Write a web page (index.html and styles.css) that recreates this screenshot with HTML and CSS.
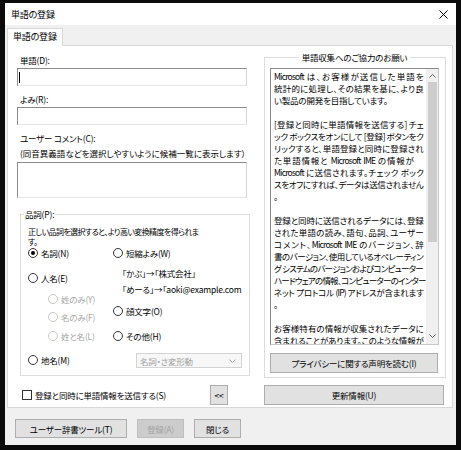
FILE: index.html
```html
<!DOCTYPE html>
<html lang="ja">

<head>
    <meta charset="UTF-8">
    <meta name="viewport" content="width=device-width, initial-scale=1.0">
    <title>単語の登録</title>
    <link rel="stylesheet" href="styles.css">
</head>

<body>
    <div class="window">
        <div class="titlebar">
            <span class="title">単語の登録</span>
            <svg class="close" width="9" height="9" viewBox="0 0 9 9">
                <path d="M0.5 0.5 L8.5 8.5 M8.5 0.5 L0.5 8.5" stroke="#000" stroke-width="1" fill="none" />
            </svg>
        </div>

        <div class="dialog">
            <div class="tabs">
                <div class="tab">単語の登録</div>
            </div>

            <div class="tab-panel">
                <!-- left side: word, reading, comment and part of speech -->
                <div class="entry">
                    <label class="field-label">単語(D):</label>
                    <div class="edit"><span class="caret"></span></div>

                    <label class="field-label spaced">よみ(R):</label>
                    <div class="edit"></div>

                    <label class="field-label spaced">ユーザー コメント(C):</label>
                    <div class="hint">(同音異義語などを選択しやすいように候補一覧に表示します）</div>
                    <div class="edit memo"></div>

                    <fieldset class="group pos">
                        <legend>品詞(P):</legend>
                        <p class="pos-note">正しい品詞を選択すると、より高い変換精度を得られま<br>す。</p>

                        <div class="pos-options">
                            <div class="pos-col first">
                                <div class="option"><span class="radio checked"></span>名詞(N)</div>
                                <div class="option person"><span class="radio"></span>人名(E)</div>
                                <div class="option sub name-1 disabled"><span class="radio"></span>姓のみ(Y)</div>
                                <div class="option sub name-2 disabled"><span class="radio"></span>名のみ(F)</div>
                                <div class="option sub name-3 disabled"><span class="radio"></span>姓と名(L)</div>
                                <div class="option place"><span class="radio"></span>地名(M)</div>
                            </div>
                            <div class="pos-col">
                                <div class="option"><span class="radio"></span>短縮よみ(W)</div>
                                <div class="example ex-1">「かぶ」→「株式会社」</div>
                                <div class="example ex-2">「めーる」→「aoki@example.com</div>
                                <div class="option face"><span class="radio"></span>顔文字(O)</div>
                                <div class="option other"><span class="radio"></span>その他(H)</div>
                                <div class="combo">
                                    <span>名詞・さ変形動</span>
                                    <svg width="7" height="4" viewBox="0 0 7 4">
                                        <path d="M0.5 0.5 L3.5 3.5 L6.5 0.5" stroke="#b5b5b5" fill="none" />
                                    </svg>
                                </div>
                            </div>
                        </div>
                    </fieldset>
                </div>

                <!-- right side: data collection notice -->
                <fieldset class="group notice">
                    <legend>単語収集へのご協力のお願い</legend>
                    <div class="notice-box">
                        <div class="notice-text">
                            <span class="ln">Microsoft は、お客様が送信した単語を</span>
                            <span class="ln">統計的に処理し、その結果を基に、より良</span>
                            い製品の開発を目指しています。<br><br>
                            <span class="ln">[登録と同時に単語情報を送信する] チェ</span>
                            <span class="ln">ック ボックスをオンにして [登録] ボタンをク</span>
                            <span class="ln">リックすると、単語登録と同時に登録され</span>
                            <span class="ln short">た単語情報と Microsoft IME の情報が</span>
                            <span class="ln">Microsoft に送信されます。チェック ボック</span>
                            <span class="ln">スをオフにすれば、データは送信されません</span>
                            。<br><br>
                            <span class="ln">登録と同時に送信されるデータには、登録</span>
                            <span class="ln">された単語の読み、語句、品詞、ユーザー</span>
                            <span class="ln">コメント、Microsoft IME のバージョン、辞</span>
                            <span class="ln">書のバージョン、使用しているオペレーティン</span>
                            <span class="ln">グ システムのバージョンおよびコンピューター</span>
                            <span class="ln">ハードウェアの情報、コンピューターのインター</span>
                            <span class="ln">ネット プロトコル (IP) アドレスが含まれます</span>
                            。<br><br>
                            <span class="ln">お客様特有の情報が収集されたデータに</span>
                            <span class="ln">含まれることがあります。このような情報が</span>
                        </div>
                        <div class="scrollbar">
                            <svg class="arrow" width="7" height="4" viewBox="0 0 7 4">
                                <path d="M0.5 3.5 L3.5 0.5 L6.5 3.5" stroke="#606060" fill="none" />
                            </svg>
                            <div class="thumb"></div>
                            <svg class="arrow down" width="7" height="4" viewBox="0 0 7 4">
                                <path d="M0.5 0.5 L3.5 3.5 L6.5 0.5" stroke="#606060" fill="none" />
                            </svg>
                        </div>
                    </div>
                    <button class="btn wide">プライバシーに関する声明を読む(I)</button>
                </fieldset>

                <div class="send-row">
                    <span class="checkbox"></span>
                    <span>登録と同時に単語情報を送信する(S)</span>
                    <button class="btn collapse">&lt;&lt;</button>
                </div>
                <button class="btn update">更新情報(U)</button>
            </div>

            <div class="footer">
                <button class="btn tool">ユーザー辞書ツール(T)</button>
                <button class="btn small" disabled>登録(A)</button>
                <button class="btn small">閉じる</button>
            </div>
        </div>
    </div>
</body>

</html>
```

FILE: styles.css
```css
* {
    margin: 0;
    padding: 0;
    box-sizing: border-box;
}

body {
    background: #0b0b0b;
    padding: 3px 5px 5px 5px;
    font-family: 'Noto Sans CJK JP', sans-serif;
    font-size: 8.5px;
    letter-spacing: -0.2px;
    font-feature-settings: "palt";
    color: #000;
}

.window {
    width: 451px;
    height: 442px;
    background: #f0f0f0;
    display: flex;
    flex-direction: column;
}

.titlebar {
    height: 22px;
    background: #fff;
    display: flex;
    align-items: center;
    justify-content: space-between;
    padding: 0 8px 0 6px;
    font-size: 9px;
}

.dialog {
    flex: 1;
    padding: 3px 3px 0 2px;
    display: flex;
    flex-direction: column;
}

.tabs {
    display: flex;
}

.tab {
    height: 18px;
    line-height: 16px;
    padding: 0 5px;
    font-size: 9px;
    background: #fff;
    border: 1px solid #d9d9d9;
    border-bottom: none;
    margin-bottom: -1px;
    position: relative;
    z-index: 1;
}

.tab-panel {
    height: 363px;
    background: #fff;
    border: 1px solid #d9d9d9;
    display: grid;
    grid-template-columns: 233px 182px;
    grid-template-rows: 327px 20px;
    column-gap: 14px;
    row-gap: 7px;
    padding: 5px 6px 0 9px;
}

/* left column */

.entry {
    padding-top: 3px;
}

.field-label {
    display: block;
    line-height: 12px;
    padding-left: 3px;
}

.field-label.spaced {
    margin-top: 7px;
}

.edit {
    width: 230px;
    height: 18px;
    margin-top: 2px;
    border: 1px solid;
    border-color: #8a8a8a #d6d6d6 #e4e4e4 #8a8a8a;
    display: flex;
    align-items: center;
}

.edit.memo {
    height: 36px;
    margin-top: 3px;
}

.caret {
    width: 1px;
    height: 11px;
    margin-left: 1px;
    background: #000;
}

.hint {
    margin-top: 3px;
    line-height: 12px;
    padding-left: 3px;
    letter-spacing: 0;
    white-space: nowrap;
}

.group {
    border: 1px solid #dcdcdc;
    min-width: 0;
}

.group legend {
    line-height: 12px;
    padding: 0 1px;
}

.pos {
    width: 230px;
    height: 168px;
    margin: 10px 0 0 3px;
    padding: 7px 0 0 7px;
}

.pos legend {
    margin-left: -4px;
}

.pos-note {
    font-size: 8px;
    line-height: 10px;
    letter-spacing: -0.6px;
    margin-bottom: 1px;
}

.pos-options {
    display: flex;
}

.pos-col.first {
    width: 85px;
}

.option {
    display: flex;
    align-items: center;
    gap: 3px;
    height: 10px;
    line-height: 10px;
}

.option.person { margin-top: 15px; }
.option.name-1 { margin-top: 11px; }
.option.name-2 { margin-top: 8px; }
.option.name-3 { margin-top: 9px; }
.option.place { margin-top: 14px; }
.option.face { margin-top: 12px; }
.option.other { margin-top: 15px; }

.option.sub {
    padding-left: 20px;
}

.option.disabled {
    color: #a6a6a6;
}

.radio {
    width: 10px;
    height: 10px;
    border: 1px solid #333;
    border-radius: 50%;
    background: #fff;
    display: flex;
    align-items: center;
    justify-content: center;
}

.radio.checked::after {
    content: '';
    width: 4px;
    height: 4px;
    border-radius: 50%;
    background: #000;
}

.disabled .radio {
    border-color: #c8c8c8;
}

.example {
    height: 10px;
    line-height: 10px;
    padding-left: 9px;
    white-space: nowrap;
}

.example.ex-1 { margin-top: 10px; }
.example.ex-2 { margin-top: 6px; }

.combo {
    width: 106px;
    height: 15px;
    margin: 12px 0 0 23px;
    padding: 0 5px 0 3px;
    border: 1px solid #d3d3d3;
    background: #f7f7f7;
    color: #a0a0a0;
    display: flex;
    align-items: center;
    justify-content: space-between;
}

/* right column */

.notice {
    padding: 5px 6px 4px 5px;
}

.notice legend {
    margin: 0 auto;
    padding: 0 3px;
}

.notice-box {
    height: 277px;
    border: 1px solid;
    border-color: #8a8a8a #c8c8c8 #c8c8c8 #8a8a8a;
    display: flex;
}

.notice-text {
    flex: 1;
    overflow: hidden;
    white-space: nowrap;
    line-height: 12px;
    padding: 1px 3px 0 3px;
}

/* full lines are spread to the box width, like the wrapped text of an edit box */
.notice-text .ln {
    display: block;
    letter-spacing: -0.8px;
    text-align: justify;
    text-align-last: justify;
}

.notice-text .ln.short {
    padding-right: 10px;
}

.scrollbar {
    width: 12px;
    flex-shrink: 0;
    background: #f0f0f0;
    display: flex;
    flex-direction: column;
    align-items: center;
}

.scrollbar .arrow {
    margin-top: 5px;
    flex-shrink: 0;
}

.scrollbar .arrow.down {
    margin: auto 0 6px;
}

.thumb {
    width: 9px;
    height: 160px;
    margin-top: 4px;
    background: #cdcdcd;
}

.btn {
    font-family: inherit;
    font-size: 8.5px;
    letter-spacing: -0.2px;
    font-feature-settings: "palt";
    color: #000;
    background: #e1e1e1;
    border: 1px solid #adadad;
    height: 20px;
}

.btn:disabled {
    background: #cccccc;
    border-color: #bfbfbf;
    color: #a3a3a3;
}

.btn.wide {
    width: 168px;
    margin-top: 8px;
}

.send-row {
    display: flex;
    align-items: center;
    gap: 3px;
    padding-left: 5px;
}

.checkbox {
    width: 10px;
    height: 10px;
    border: 1px solid #333;
    background: #fff;
}

.btn.collapse {
    width: 18px;
    margin: 0 22px 0 auto;
}

.btn.update {
    width: 180px;
}

/* bottom buttons */

.footer {
    display: flex;
    gap: 10px;
    padding: 11px 0 0 8px;
}

.footer .btn {
    height: 19px;
}

.btn.tool {
    width: 112px;
}

.btn.small {
    width: 47px;
}
```
